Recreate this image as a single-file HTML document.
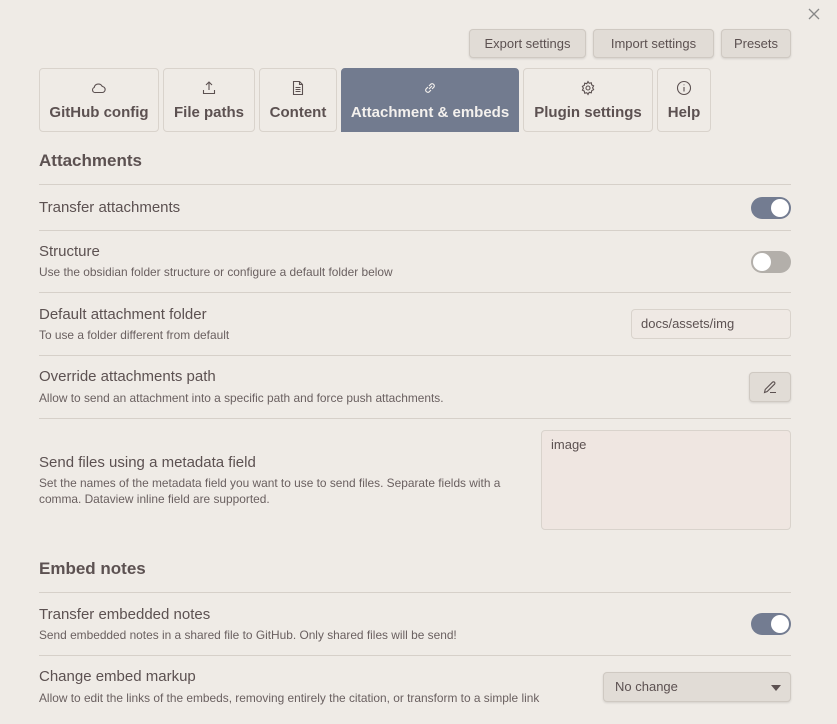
<!DOCTYPE html>
<html><head><meta charset="utf-8">
<style>
*{box-sizing:border-box;margin:0;padding:0}
body{width:837px;height:724px;overflow:hidden;background:#efebe6;font-family:"Liberation Sans",sans-serif;color:#5c5151;position:relative}
.abs{position:absolute}
.btn{position:absolute;top:29px;height:29px;background:#e1dcd6;border:1px solid #cfc9c2;border-radius:4px;box-shadow:0 1px 2px rgba(0,0,0,.12);font-size:13px;line-height:27px;text-align:center;color:#5c5151}
.tab{position:absolute;top:68px;height:64px;border:1px solid #d9d3cc;border-radius:4px;text-align:center;font-weight:bold;font-size:15px;color:#5c5151}
.tab svg{position:absolute;top:11px;left:50%;margin-left:-8px}
.tab span{position:absolute;top:35px;left:0;right:0}
.tab.act{background:#727b8f;color:#f4f1ee;border-color:#727b8f;border-radius:4px 4px 0 0}
.h{position:absolute;left:39px;font-size:17px;font-weight:bold;color:#5c5151}
.line{position:absolute;left:39px;width:752px;height:1px;background:#d6d0c9}
.n{position:absolute;left:39px;font-size:15px;color:#5c5151}
.d{position:absolute;left:39px;font-size:11.9px;color:#6a6060;line-height:16px}
.tg{position:absolute;left:751px;width:40px;height:22px;border-radius:11px}
.tg.on{background:#737c91}.tg.off{background:#b3afaa}
.tg i{position:absolute;top:2px;width:18px;height:18px;border-radius:50%;background:#fff}
.tg.on i{right:2px}.tg.off i{left:2px}
</style></head><body>
<svg class="abs" style="left:808px;top:8px" width="12" height="12" viewBox="0 0 12 12"><path d="M1 1L11 11M11 1L1 11" stroke="#888" stroke-width="1.3"/></svg>
<div class="btn" style="left:469px;width:117px">Export settings</div>
<div class="btn" style="left:593px;width:121px">Import settings</div>
<div class="btn" style="left:721px;width:70px">Presets</div>

<div class="tab" style="left:39px;width:120px"><svg width="16" height="16" viewBox="0 0 16 16" fill="none" stroke="#5c5151" stroke-width="1.1"><path d="M4.5 12.5h6.5a3 3 0 0 0 .3-6A4.3 4.3 0 0 0 3.2 7.5a2.6 2.6 0 0 0 1.3 5z"/></svg><span>GitHub config</span></div>
<div class="tab" style="left:163px;width:92px"><svg width="16" height="16" viewBox="0 0 16 16" fill="none" stroke="#5c5151" stroke-width="1.1"><path d="M8 10V2M5 5l3-3 3 3M2.5 10v3.5h11V10"/></svg><span>File paths</span></div>
<div class="tab" style="left:259px;width:78px"><svg width="16" height="16" viewBox="0 0 16 16" fill="none" stroke="#5c5151" stroke-width="1.1"><path d="M3.5 1.5h6l3 3v10h-9zM9.5 1.5v3h3M5.5 7.5h5M5.5 9.5h5M5.5 11.5h5"/></svg><span>Content</span></div>
<div class="tab act" style="left:341px;width:178px"><svg width="16" height="16" viewBox="0 0 16 16" fill="none" stroke="#f4f1ee" stroke-width="1.1"><path d="M7 9l3-3M6 7L4 9a2.2 2.2 0 0 0 3 3l2-2M10 9l2-2a2.2 2.2 0 0 0-3-3L7 6"/></svg><span>Attachment &amp; embeds</span></div>
<div class="tab" style="left:523px;width:130px"><svg width="16" height="16" viewBox="0 0 16 16" fill="none" stroke="#5c5151" stroke-width="1.1"><circle cx="8" cy="8" r="2"/><path d="M8 1.5l1.2 1.8 2.1-.5.4 2.1 1.9 1-1 1.9 1 1.9-1.9 1-.4 2.1-2.1-.5L8 14.5l-1.2-1.8-2.1.5-.4-2.1-1.9-1 1-1.9-1-1.9 1.9-1 .4-2.1 2.1.5z"/></svg><span>Plugin settings</span></div>
<div class="tab" style="left:657px;width:54px"><svg width="16" height="16" viewBox="0 0 16 16" fill="none" stroke="#5c5151" stroke-width="1.1"><circle cx="8" cy="8" r="6.5"/><path d="M8 7v4.5M8 4.5v.8"/></svg><span>Help</span></div>

<div class="h" style="top:151px">Attachments</div>
<div class="line" style="top:184px"></div>
<div class="n" style="top:199px">Transfer attachments</div>
<div class="tg on" style="top:197px"><i></i></div>
<div class="line" style="top:230px"></div>
<div class="n" style="top:243px">Structure</div>
<div class="d" style="top:264px">Use the obsidian folder structure or configure a default folder below</div>
<div class="tg off" style="top:251px"><i></i></div>
<div class="line" style="top:292px"></div>
<div class="n" style="top:306px">Default attachment folder</div>
<div class="d" style="top:327px">To use a folder different from default</div>
<div class="abs" style="left:631px;top:309px;width:160px;height:30px;border:1px solid #d9d3cc;border-radius:4px;background:#efe9e4;font-size:13px;line-height:28px;padding-left:9px;color:#5c5151">docs/assets/img</div>
<div class="line" style="top:355px"></div>
<div class="n" style="top:368px">Override attachments path</div>
<div class="d" style="top:390px">Allow to send an attachment into a specific path and force push attachments.</div>
<div class="abs" style="left:749px;top:372px;width:42px;height:30px;background:#e1dcd6;border:1px solid #cfc9c2;border-radius:4px;box-shadow:0 1px 2px rgba(0,0,0,.12)"><svg style="position:absolute;left:12px;top:6px" width="16" height="16" viewBox="0 0 16 16" fill="none" stroke="#5c5151" stroke-width="1.1"><path d="M2.5 13.5l.7-3L10.5 3.2a1.4 1.4 0 0 1 2 2L5.2 12.5zM8 13.5h6"/></svg></div>
<div class="line" style="top:418px"></div>
<div class="n" style="top:454px">Send files using a metadata field</div>
<div class="d" style="top:475px;width:480px">Set the names of the metadata field you want to use to send files. Separate fields with a comma. Dataview inline field are supported.</div>
<div class="abs" style="left:541px;top:430px;width:250px;height:100px;border:1px solid #d9d3cc;border-radius:4px;background:#efe6e1;font-size:13px;padding:6px 9px;color:#5c5151">image</div>

<div class="h" style="top:559px">Embed notes</div>
<div class="line" style="top:592px"></div>
<div class="n" style="top:606px">Transfer embedded notes</div>
<div class="d" style="top:627px">Send embedded notes in a shared file to GitHub. Only shared files will be send!</div>
<div class="tg on" style="top:613px"><i></i></div>
<div class="line" style="top:655px"></div>
<div class="n" style="top:668px">Change embed markup</div>
<div class="d" style="top:690px">Allow to edit the links of the embeds, removing entirely the citation, or transform to a simple link</div>
<div class="abs" style="left:603px;top:672px;width:188px;height:30px;background:#e1dcd6;border:1px solid #cfc9c2;border-radius:4px;box-shadow:0 1px 2px rgba(0,0,0,.12);font-size:13px;line-height:28px;padding-left:11px">No change<span style="position:absolute;right:9px;top:12px;width:0;height:0;border-left:5px solid transparent;border-right:5px solid transparent;border-top:6px solid #5c5151"></span></div>
</body></html>
